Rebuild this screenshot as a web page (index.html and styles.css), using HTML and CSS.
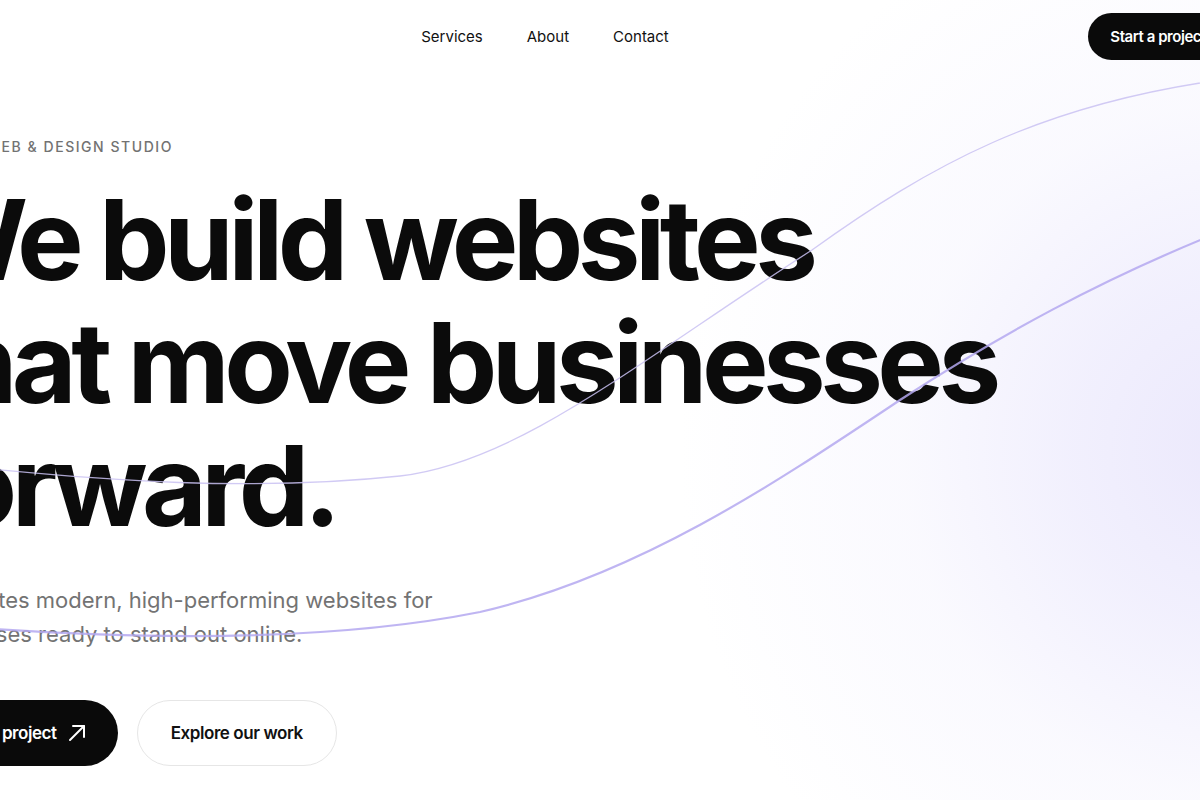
FILE: index.html
```html
<!DOCTYPE html>
<html lang="en">
<head>
<meta charset="utf-8">
<title>Ivo — Web &amp; Design Studio</title>
<link rel="stylesheet" href="styles.css">
</head>
<body>
  <div class="page">
    <header class="topbar">
      <a class="brand" href="#">Ivo</a>
      <nav class="nav">
        <a href="#">Services</a>
        <a href="#">About</a>
        <a href="#">Contact</a>
      </nav>
      <a class="cta cta-small" href="#">Start a project</a>
    </header>

    <main class="hero">
      <p class="eyebrow"><span class="eyebrow-rule"></span>Web &amp; Design Studio</p>
      <h1 class="headline">We build websites<br>that move businesses<br>forward.</h1>
      <p class="lede">Ivo creates modern, high-performing websites for businesses ready to stand out online.</p>
      <div class="actions">
        <a class="cta cta-large" href="#">Start a project
          <svg class="arrow" viewBox="0 0 24 24" width="24" height="24" fill="none" stroke="currentColor" stroke-width="2" stroke-linecap="round" stroke-linejoin="round"><path d="M5 19 19 5"/><path d="M8 5h11v11"/></svg>
        </a>
        <a class="ghost" href="#">Explore our work</a>
      </div>
    </main>
  </div>

  <svg class="waves" viewBox="0 0 1200 800" width="1200" height="800" aria-hidden="true">
    <path class="wave-thin" d="M -20 468 C 100 480, 250 492, 400 476 C 520 462, 640 360, 812 250 C 930 165, 1040 105, 1220 80"/>
    <path class="wave-bold" d="M -20 628 C 150 640, 330 642, 480 612 C 640 575, 780 480, 900 400 C 1000 335, 1100 280, 1220 232"/>
  </svg>
</body>
</html>
```

FILE: styles.css
```css
html, body {
  margin: 0;
  padding: 0;
}

body {
  position: relative;
  width: 1200px;
  height: 800px;
  overflow: hidden;
  font-family: Inter, "Noto Sans", "Liberation Sans", sans-serif;
  color: #0d0d0d;
  background:
    radial-gradient(ellipse 560px 580px at 1240px 450px,
      rgba(235, 232, 252, 1) 0%,
      rgba(239, 237, 253, 0.85) 30%,
      rgba(246, 245, 254, 0.55) 60%,
      rgba(255, 255, 255, 0) 100%),
    #ffffff;
}

a {
  color: inherit;
  text-decoration: none;
}

/* wide canvas that bleeds past the left and right edges */
.page {
  width: 1400px;
  margin-left: -155px;
}

.topbar {
  display: grid;
  grid-template-columns: 1fr auto 1fr;
  align-items: center;
  padding: 13px 17px;
}

.brand {
  justify-self: start;
  font-weight: 800;
  font-size: 22px;
  letter-spacing: -0.03em;
}

.nav {
  display: flex;
  gap: 44px;
  font-size: 15px;
  font-weight: 400;
  color: #111;
}

.cta {
  display: inline-flex;
  align-items: center;
  background: #0a0a0a;
  color: #fff;
  border-radius: 999px;
  font-weight: 600;
}

.cta-small {
  justify-self: end;
  height: 47px;
  padding: 0 22px;
  font-size: 15px;
  letter-spacing: -0.03em;
}

.hero {
  padding: 63px 0 0 81px;
}

.eyebrow {
  display: flex;
  align-items: center;
  gap: 16px;
  margin: 0;
  height: 20px;
  font-size: 14px;
  font-weight: 500;
  letter-spacing: 0.11em;
  text-transform: uppercase;
  color: #727272;
}

.eyebrow-rule {
  width: 44px;
  height: 1px;
  background: #9a9a9a;
}

.headline {
  margin: 22px 0 0 -14px;
  font-size: 112px;
  line-height: 123px;
  font-weight: 700;
  letter-spacing: -0.05em;
  color: #0b0b0b;
}

.lede {
  margin: 36px 0 0 -11px;
  width: 560px;
  font-size: 22px;
  line-height: 34px;
  color: #737373;
}

.actions {
  display: flex;
  gap: 19px;
  margin: 49px 0 0 -12px;
}

.cta-large {
  height: 66px;
  padding: 0 29px 0 33px;
  gap: 8px;
  font-size: 17px;
  letter-spacing: -0.025em;
}

.arrow {
  display: block;
}

.ghost {
  display: inline-flex;
  align-items: center;
  box-sizing: border-box;
  height: 66px;
  padding: 0 33px;
  border: 1.5px solid #e6e6e6;
  border-radius: 999px;
  background: #fff;
  font-size: 17px;
  font-weight: 600;
  letter-spacing: -0.025em;
  color: #111;
}

/* decorative curves drawn over the hero */
.waves {
  position: absolute;
  top: 0;
  left: 0;
  pointer-events: none;
  fill: none;
}

.wave-thin {
  stroke: #c9c1f2;
  stroke-width: 1.3;
  opacity: 0.85;
}

.wave-bold {
  stroke: #b4a8f0;
  stroke-width: 2.2;
  opacity: 0.85;
}
```
